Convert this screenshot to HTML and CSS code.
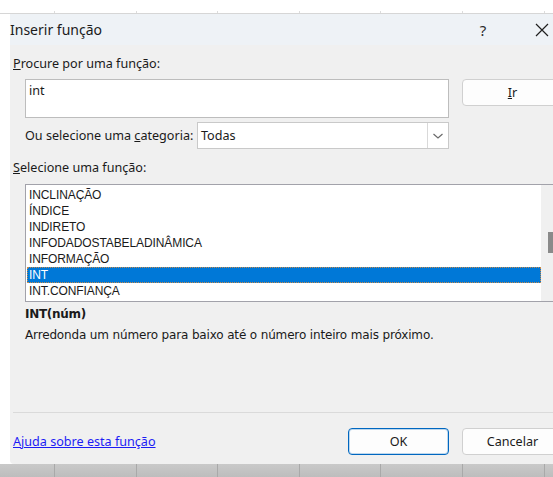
FILE: index.html
```html
<!DOCTYPE html>
<html lang="pt-BR">
<head>
<meta charset="utf-8">
<title>Inserir função</title>
<link rel="stylesheet" href="styles.css">
</head>
<body>
<div class="sheet">
  <div class="sheet-top"></div>
  <div class="sheet-mid">
    <div class="gutter"></div>
    <div class="dialog">
      <div class="titlebar">
        <span class="title">Inserir função</span>
        <span class="help">?</span>
        <span class="close">
          <svg width="14" height="14" viewBox="0 0 14 14"><path d="M1 1 L13 13 M13 1 L1 13" stroke="#1f1f1f" stroke-width="1.2" fill="none"/></svg>
        </span>
      </div>
      <div class="body">
        <div class="label label-search"><u>P</u>rocure por uma função:</div>
        <div class="row row-search">
          <div class="search-box">int</div>
          <button class="btn btn-go"><u>I</u>r</button>
        </div>
        <div class="row row-cat">
          <span class="cat-label">Ou selecione uma <u>c</u>ategoria:</span>
          <div class="select">
            <span class="select-value">Todas</span>
            <span class="select-arrow">
              <svg width="12" height="8" viewBox="0 0 12 8"><path d="M1.5 2 L6 6 L10.5 2" stroke="#6a6a6a" stroke-width="1.2" fill="none"/></svg>
            </span>
          </div>
        </div>
        <div class="label label-list"><u>S</u>elecione uma função:</div>
        <div class="listbox">
          <ul class="items">
            <li>INCLINAÇÃO</li>
            <li>ÍNDICE</li>
            <li>INDIRETO</li>
            <li>INFODADOSTABELADINÂMICA</li>
            <li>INFORMAÇÃO</li>
            <li class="selected">INT</li>
            <li>INT.CONFIANÇA</li>
          </ul>
          <div class="scrollbar"><div class="thumb"></div></div>
        </div>
        <div class="signature">INT(núm)</div>
        <div class="description">Arredonda um número para baixo até o número inteiro mais próximo.</div>
        <div class="separator"></div>
        <div class="footer">
          <a class="help-link" href="#">Ajuda sobre esta função</a>
          <div class="actions">
            <button class="btn btn-ok">OK</button>
            <button class="btn btn-cancel">Cancelar</button>
          </div>
        </div>
      </div>
    </div>
  </div>
  <div class="sheet-bottom"></div>
</div>
</body>
</html>
```

FILE: styles.css
```css
* { box-sizing: border-box; }

html, body {
  margin: 0;
  padding: 0;
  background: #ffffff;
}

.sheet {
  width: 553px;
  height: 477px;
  overflow: hidden;
  display: flex;
  flex-direction: column;
  font-family: "Noto Sans", "Liberation Sans", Arial, sans-serif;
  font-size: 12.6px;
  color: #1a1a1a;
}

/* spreadsheet cells peeking above the dialog */
.sheet-top {
  height: 14px;
  flex: none;
  background:
    linear-gradient(#d6d6d6, #d6d6d6) bottom / 100% 1px no-repeat,
    repeating-linear-gradient(90deg, transparent 0 54px, #dcdcdc 54px 55px, transparent 55px 81.6px) 0 11px / 100% 3px no-repeat,
    #ffffff;
}

.sheet-mid {
  flex: 1;
  display: flex;
  min-height: 0;
}

.gutter {
  width: 10px;
  flex: none;
  background: #ffffff;
}

.sheet-bottom {
  height: 13px;
  flex: none;
  background:
    repeating-linear-gradient(90deg, transparent 0 54px, #a9a9a9 54px 55px, transparent 55px 81.6px),
    linear-gradient(#c9c9c9, #bdbdbd);
}

.dialog {
  width: 560px;
  flex: none;
  display: flex;
  flex-direction: column;
  background: #f0f0f0;
  border-bottom-left-radius: 4px;
}

.titlebar {
  height: 31px;
  flex: none;
  display: flex;
  align-items: center;
  background: #eef2f6;
}

.title {
  font-size: 14px;
  color: #1b1b1b;
  flex: 1;
}

.help {
  font-size: 15px;
  width: 14px;
  text-align: center;
  margin-right: 45px;
  color: #2a2a2a;
}

.close {
  width: 14px;
  height: 14px;
  margin-right: 21px;
  display: flex;
}

.body {
  flex: 1;
  display: flex;
  flex-direction: column;
  padding-left: 3px;
}

.label {
  height: 16px;
  line-height: 16px;
}

.label-search { margin-top: 11px; }

.row {
  display: flex;
  padding-left: 12px;
}

.row-search {
  margin-top: 7px;
  gap: 13px;
  align-items: flex-start;
}

.search-box {
  width: 424px;
  height: 39px;
  background: #ffffff;
  border: 1px solid #bdbdbd;
  padding: 3px 3px;
  line-height: 16px;
}

.btn {
  font-family: "Noto Sans", "Liberation Sans", Arial, sans-serif;
  font-size: 12.6px;
  color: #1a1a1a;
  background: #fdfdfd;
  border: 1px solid #d0d0d0;
  border-radius: 4px;
  width: 101px;
  height: 27px;
  padding: 0;
}

.btn-go { flex: none; }

.row-cat {
  margin-top: 4px;
  align-items: center;
}

.cat-label {
  width: 172px;
  line-height: 16px;
  white-space: nowrap;
}

.select {
  width: 252px;
  height: 27px;
  background: #ffffff;
  border: 1px solid #c9c9c9;
  display: flex;
  align-items: center;
}

.select-value {
  flex: 1;
  padding-left: 3px;
}

.select-arrow {
  width: 21px;
  height: 25px;
  border-left: 1px solid #d9d9d9;
  display: flex;
  align-items: center;
  justify-content: center;
}

.label-list { margin-top: 11px; }

.listbox {
  margin-top: 8px;
  margin-left: 12px;
  height: 118px;
  display: flex;
  background: #ffffff;
  border: 1px solid #a2a2aa;
}

.items {
  list-style: none;
  margin: 0;
  padding: 2px 0 0 1px;
  width: 515px;
  font-family: "Liberation Sans", Arial, sans-serif;
  font-size: 12px;
  letter-spacing: -0.1px;
  color: #1a1a1a;
}

.items li {
  height: 16px;
  line-height: 16px;
  padding-left: 2px;
  width: 514px;
}

.items li.selected {
  background: #0078d7;
  color: #ffffff;
  outline: 1px dotted #c88a4a;
  outline-offset: -1px;
}

.scrollbar {
  width: 17px;
  background: #f0f0f0;
  padding-top: 47px;
  padding-left: 7px;
}

.thumb {
  width: 8px;
  height: 21px;
  background: #8a8a8a;
}

.signature {
  margin-top: 4px;
  padding-left: 12px;
  height: 16px;
  line-height: 16px;
  font-family: "DejaVu Sans", Verdana, sans-serif;
  font-size: 12px;
  font-weight: bold;
  letter-spacing: -0.3px;
}

.description {
  margin-top: 5px;
  padding-left: 12px;
  height: 16px;
  line-height: 16px;
  font-family: "DejaVu Sans", Verdana, sans-serif;
  font-size: 12px;
  letter-spacing: -0.15px;
}

.separator {
  margin-top: 69px;
  height: 1px;
  background: #dadada;
}

.footer {
  margin-top: 15px;
  display: flex;
  align-items: center;
}

.help-link {
  flex: 1;
  color: #1c1cf5;
  text-decoration: underline;
  line-height: 16px;
}

.actions {
  display: flex;
  gap: 13px;
  margin-right: 7px;
}

.btn-ok {
  border-color: #0067c0;
  box-shadow: inset 0 0 0 1px rgba(0, 103, 192, 0.25);
}
```
